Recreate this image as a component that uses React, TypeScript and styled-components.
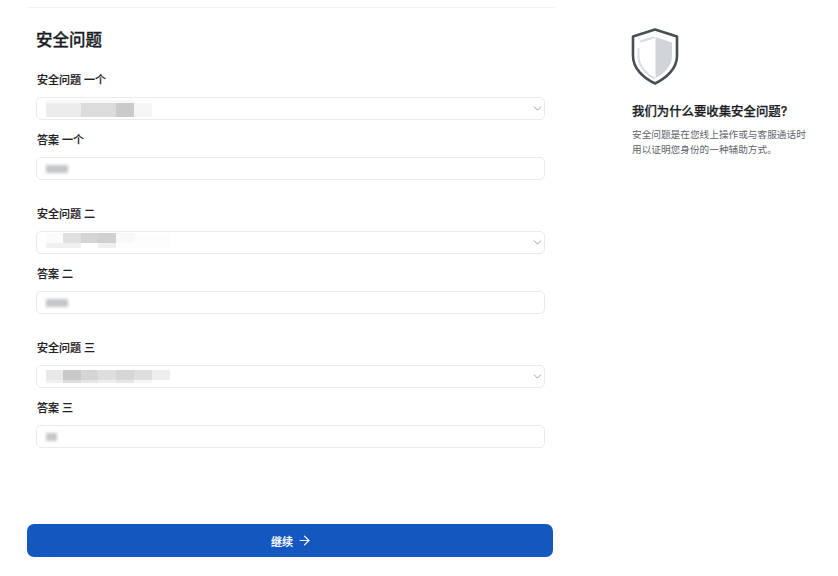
import type { ReactNode } from 'react';
import styled, { createGlobalStyle } from 'styled-components';
import { ChevronDown, ArrowRight } from 'lucide-react';

const GlobalStyle = createGlobalStyle`
  html, body {
    margin: 0;
    padding: 0;
    background: #ffffff;
  }
  body {
    font-family: "Inter", "Noto Sans CJK SC", sans-serif;
  }
`;

const Page = styled.div`
  width: 838px;
  height: 576px;
  box-sizing: border-box;
  padding: 7px 0 0 27px;
  display: flex;
  overflow: hidden;
`;

const Main = styled.main`
  width: 528px;
  height: 549px;
  border-top: 1px solid #f1f2f3;
  display: flex;
  flex-direction: column;
`;

const Form = styled.div`
  flex: 1;
  padding: 0 10px 0 9px;
`;

const Title = styled.h1`
  margin: 21px 0 0;
  font-size: 16.5px;
  line-height: 22px;
  font-weight: 500;
  -webkit-text-stroke: 0.3px #1a1c1f;
  color: #1a1c1f;
`;

const Group = styled.section<{ $top: number }>`
  margin-top: ${(p) => p.$top}px;
`;

const Label = styled.div<{ $top?: number }>`
  margin-top: ${(p) => p.$top ?? 0}px;
  padding-left: 1px;
  font-size: 11px;
  line-height: 14px;
  font-weight: 500;
  -webkit-text-stroke: 0.2px #1f2124;
  color: #1f2124;
`;

const Box = styled.div`
  margin-top: 10px;
  width: 509px;
  height: 23px;
  box-sizing: border-box;
  border: 1px solid #e8eaed;
  border-radius: 5px;
  padding: 0 0 0 9px;
  display: flex;
  align-items: center;
  justify-content: space-between;
  background: #ffffff;
  color: #6f747b;
`;

const Mosaic = styled.div<{ $offset: number }>`
  align-self: flex-start;
  margin-top: ${(p) => p.$offset}px;
  display: flex;
  flex-direction: column;
`;

const TileRow = styled.div`
  display: flex;
`;

const Tile = styled.div<{ $w: number; $h: number; $c: string }>`
  width: ${(p) => p.$w}px;
  height: ${(p) => p.$h}px;
  background: ${(p) => p.$c};
`;

const Smudge = styled.div<{ $w: number }>`
  width: ${(p) => p.$w}px;
  height: 8px;
  background: #c4c6c9;
  filter: blur(1.7px);
`;

const Continue = styled.button`
  width: 526px;
  height: 33px;
  flex: none;
  border: none;
  border-radius: 7px;
  background: #1258bf;
  color: #ffffff;
  font-family: inherit;
  font-size: 11px;
  font-weight: 500;
  -webkit-text-stroke: 0.2px #ffffff;
  display: flex;
  align-items: center;
  justify-content: center;
  gap: 4px;
  padding: 0 0 0 3px;
`;

const Aside = styled.aside`
  margin-left: 76px;
  padding-top: 21px;
  width: 176px;
`;

const InfoTitle = styled.h2`
  margin: 18px 0 0 1px;
  font-size: 12.4px;
  line-height: 18px;
  font-weight: 500;
  -webkit-text-stroke: 0.25px #1a1c1f;
  color: #1a1c1f;
  white-space: nowrap;
`;

const InfoText = styled.p`
  margin: 6px 0 0 1px;
  font-size: 9.67px;
  line-height: 15px;
  color: #60656b;
`;

const ShieldIcon = () => (
  <svg width="48" height="57" viewBox="0 0 48 57" fill="none" style={{ display: 'block' }}>
    <path
      d="M24 1.5 L46 8.5 V28 C46 40 36 50 24 55.5 C12 50 2 40 2 28 V8.5 Z"
      stroke="#484e56"
      strokeWidth="2.6"
      strokeLinejoin="round"
    />
    <path d="M24.5 9 L41 14.5 V28 C41 38 33 46 24.5 50 Z" fill="#d1d5da" />
    <path
      d="M22.5 9.5 L9.5 13.5 M7.5 21 V28 C7.5 38 15 46 23 50"
      stroke="#d8dbdf"
      strokeWidth="2"
      strokeLinecap="round"
    />
  </svg>
);

type TileSpec = [number, string];

const firstFaint: TileSpec[] = [[90, '#f8f8f8']];
const firstTiles: TileSpec[] = [
  [35, '#ececec'],
  [35, '#dcdcdc'],
  [18, '#cacaca'],
  [18, '#f5f5f5'],
];
const secondTop: TileSpec[] = [
  [17, '#fbfbfb'],
  [18, '#e0e0e0'],
  [17, '#d5d5d5'],
  [18, '#d0d0d0'],
  [18, '#f8f8f8'],
  [36, '#fcfcfc'],
];
const secondBottom: TileSpec[] = [
  [35, '#f0f0f0'],
  [17, '#ffffff'],
  [18, '#f0f0f0'],
  [54, '#fdfdfd'],
];
const thirdTop: TileSpec[] = [
  [17, '#e8e8e8'],
  [18, '#c9c9c9'],
  [17, '#d5d5d5'],
  [18, '#dedede'],
  [18, '#d6d6d6'],
  [18, '#dedede'],
  [18, '#eeeeee'],
];
const thirdBottom: TileSpec[] = [
  [17, '#f0f0f0'],
  [18, '#dddddd'],
  [17, '#e6e6e6'],
  [18, '#eeeeee'],
  [18, '#e6e6e6'],
  [18, '#f6f6f6'],
];

const Row = ({ tiles, h }: { tiles: TileSpec[]; h: number }) => (
  <TileRow>
    {tiles.map(([w, c], i) => (
      <Tile key={i} $w={w} $h={h} $c={c} />
    ))}
  </TileRow>
);

const Select = ({ offset, children }: { offset: number; children: ReactNode }) => (
  <Box>
    <Mosaic $offset={offset}>{children}</Mosaic>
    <ChevronDown size={13} strokeWidth={1.3} />
  </Box>
);

const groups = [
  {
    top: 22,
    question: '安全问题 一个',
    answer: '答案 一个',
    offset: 2,
    select: (
      <>
        <Row tiles={firstFaint} h={3} />
        <Row tiles={firstTiles} h={14} />
      </>
    ),
    smudge: 22,
  },
  {
    top: 27,
    question: '安全问题 二',
    answer: '答案 二',
    offset: 1,
    select: (
      <>
        <Row tiles={secondTop} h={10} />
        <Row tiles={secondBottom} h={5} />
      </>
    ),
    smudge: 22,
  },
  {
    top: 27,
    question: '安全问题 三',
    answer: '答案 三',
    offset: 4,
    select: (
      <>
        <Row tiles={thirdTop} h={10} />
        <Row tiles={thirdBottom} h={3} />
      </>
    ),
    smudge: 11,
  },
];

export default function App() {
  return (
    <>
      <GlobalStyle />
      <Page>
        <Main>
          <Form>
            <Title>安全问题</Title>
            {groups.map((g) => (
              <Group key={g.question} $top={g.top}>
                <Label>{g.question}</Label>
                <Select offset={g.offset}>{g.select}</Select>
                <Label $top={13}>{g.answer}</Label>
                <Box>
                  <Smudge $w={g.smudge} />
                </Box>
              </Group>
            ))}
          </Form>
          <Continue>
            继续 <ArrowRight size={15} strokeWidth={1.9} />
          </Continue>
        </Main>
        <Aside>
          <ShieldIcon />
          <InfoTitle>我们为什么要收集安全问题?</InfoTitle>
          <InfoText>安全问题是在您线上操作或与客服通话时用以证明您身份的一种辅助方式。</InfoText>
        </Aside>
      </Page>
    </>
  );
}
